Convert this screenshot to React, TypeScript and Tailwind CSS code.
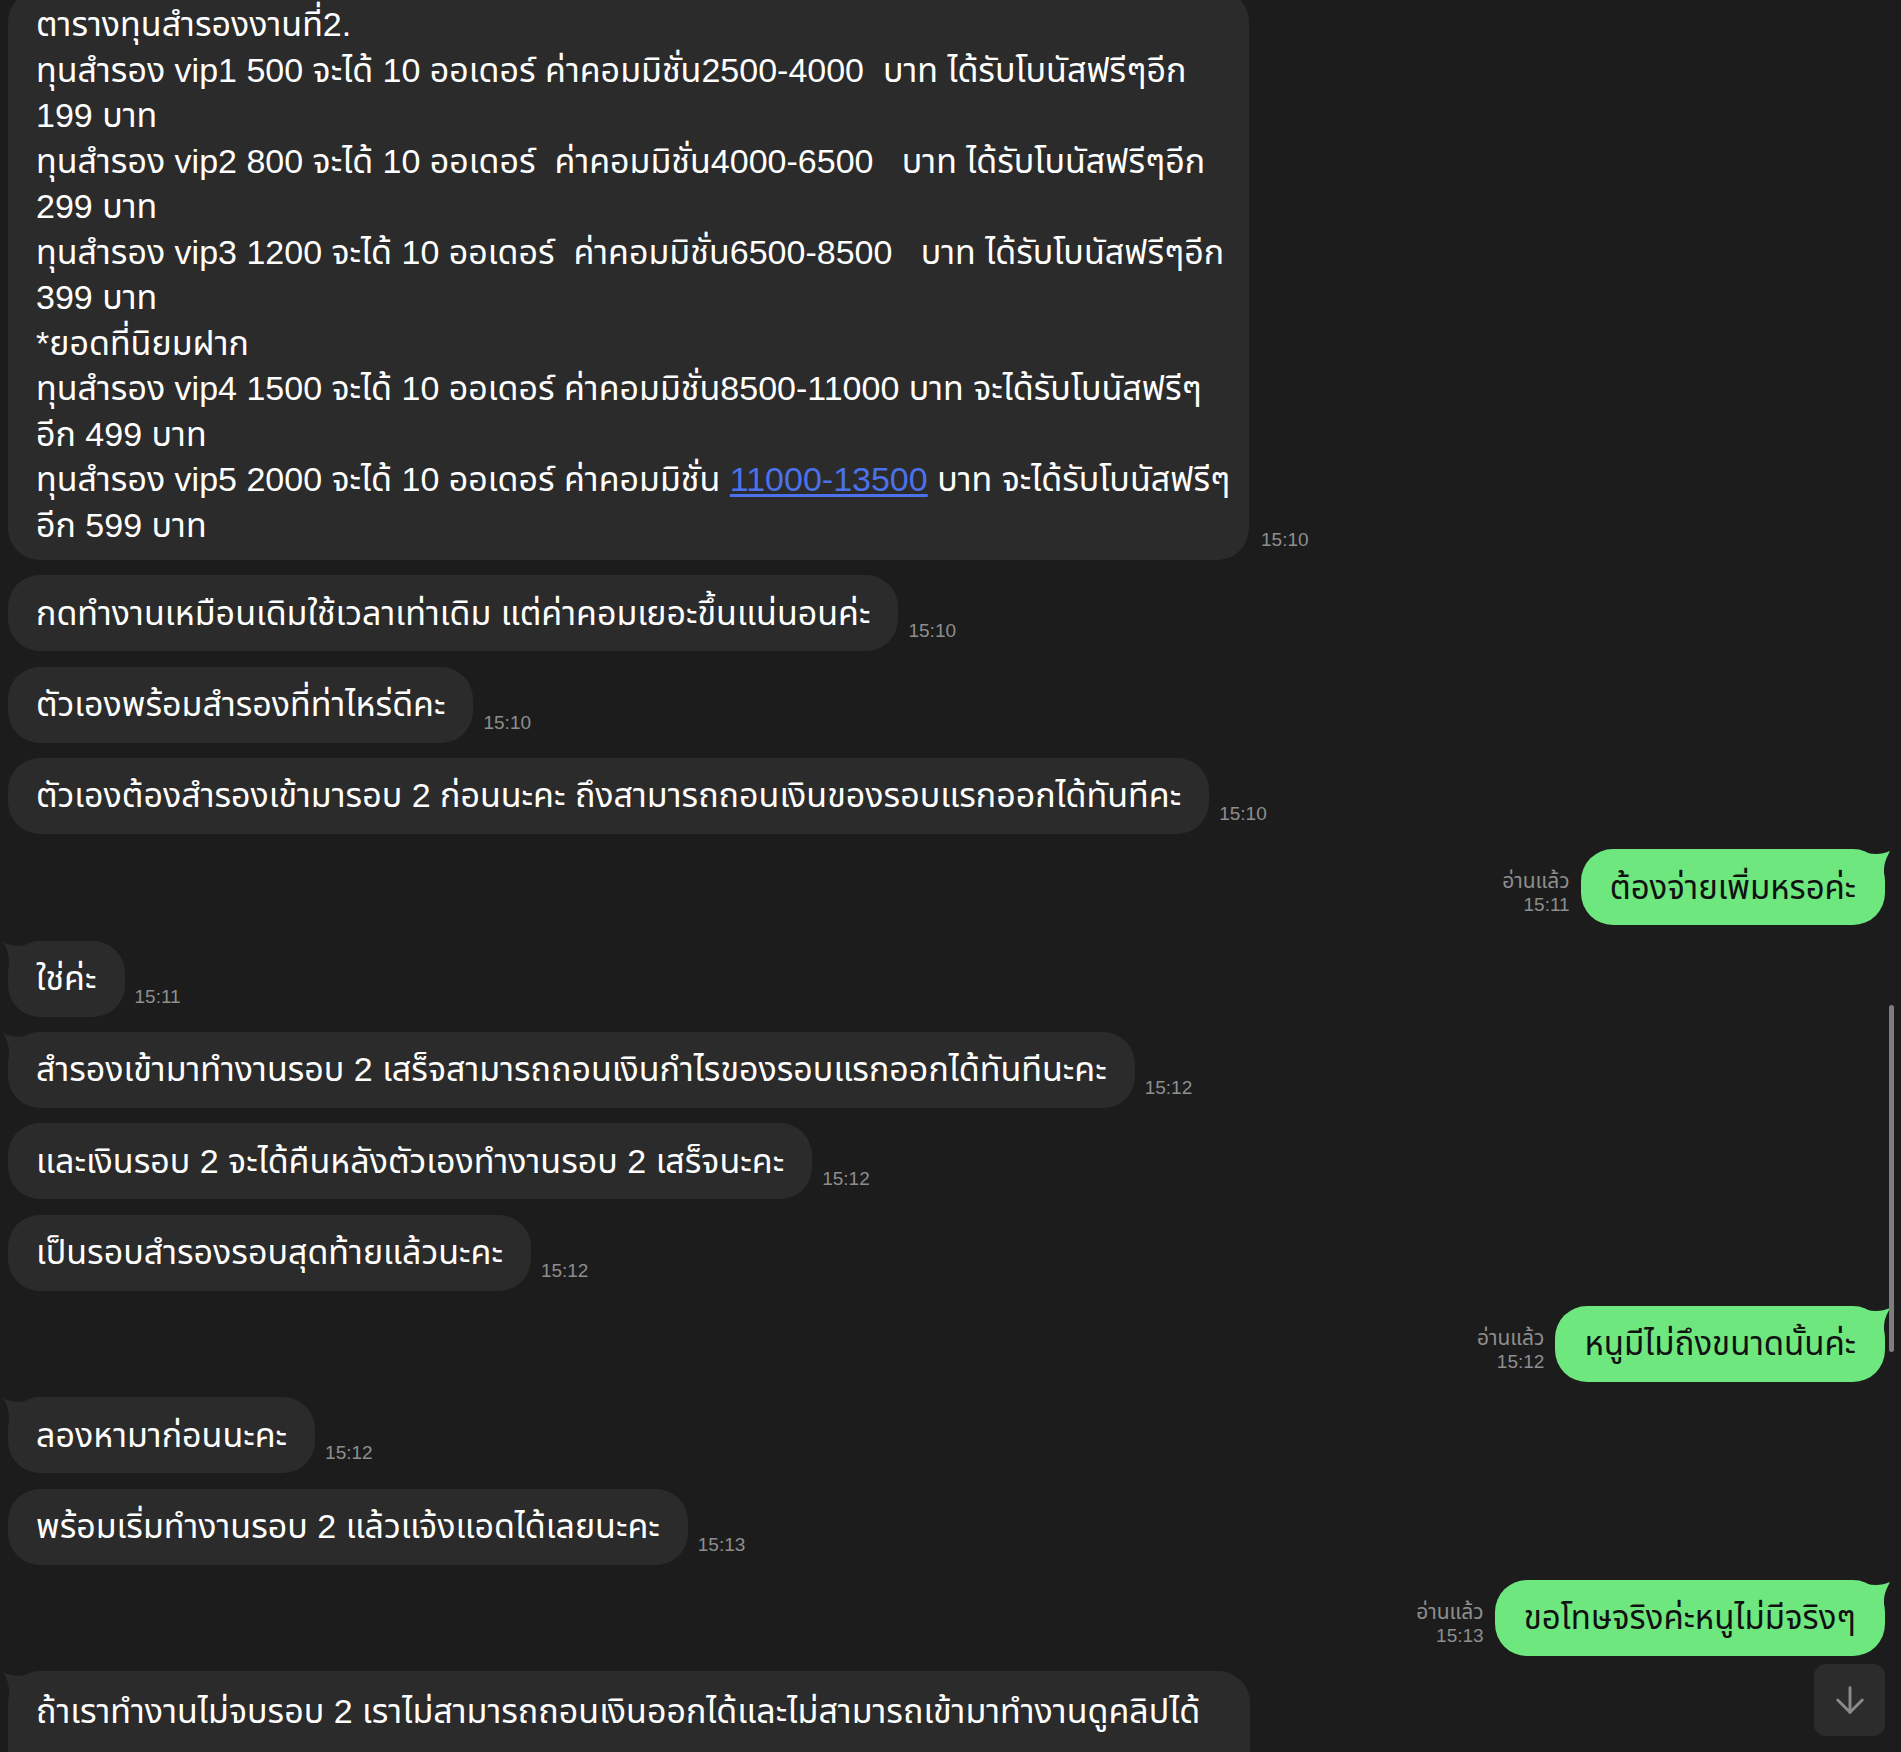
import React from 'react';
import { ArrowDown } from 'lucide-react';

const font = { fontFamily: '"Liberation Sans", "Noto Sans Thai", "Noto Sans", sans-serif' };

type Msg = { side: 'in' | 'out'; text: string; time: string; tail?: boolean };

const messages: Msg[] = [
  { side: 'in', text: 'กดทำงานเหมือนเดิมใช้เวลาเท่าเดิม แต่ค่าคอมเยอะขึ้นแน่นอนค่ะ', time: '15:10' },
  { side: 'in', text: 'ตัวเองพร้อมสำรองที่ท่าไหร่ดีคะ', time: '15:10' },
  { side: 'in', text: 'ตัวเองต้องสำรองเข้ามารอบ 2 ก่อนนะคะ ถึงสามารถถอนเงินของรอบแรกออกได้ทันทีคะ', time: '15:10' },
  { side: 'out', text: 'ต้องจ่ายเพิ่มหรอค่ะ', time: '15:11' },
  { side: 'in', text: 'ใช่ค่ะ', time: '15:11', tail: true },
  { side: 'in', text: 'สำรองเข้ามาทำงานรอบ 2 เสร็จสามารถถอนเงินกำไรของรอบแรกออกได้ทันทีนะคะ', time: '15:12', tail: true },
  { side: 'in', text: 'และเงินรอบ 2 จะได้คืนหลังตัวเองทำงานรอบ 2 เสร็จนะคะ', time: '15:12' },
  { side: 'in', text: 'เป็นรอบสำรองรอบสุดท้ายแล้วนะคะ', time: '15:12' },
  { side: 'out', text: 'หนูมีไม่ถึงขนาดนั้นค่ะ', time: '15:12' },
  { side: 'in', text: 'ลองหามาก่อนนะคะ', time: '15:12', tail: true },
  { side: 'in', text: 'พร้อมเริ่มทำงานรอบ 2 แล้วแจ้งแอดได้เลยนะคะ', time: '15:13' },
  { side: 'out', text: 'ขอโทษจริงค่ะหนูไม่มีจริงๆ', time: '15:13' },
];

const bigLines: React.ReactNode[] = [
  'ตารางทุนสำรองงานที่2.',
  'ทุนสำรอง vip1 500 จะได้ 10 ออเดอร์ ค่าคอมมิชั่น2500-4000  บาท ได้รับโบนัสฟรีๆอีก',
  '199 บาท',
  'ทุนสำรอง vip2 800 จะได้ 10 ออเดอร์  ค่าคอมมิชั่น4000-6500   บาท ได้รับโบนัสฟรีๆอีก',
  '299 บาท',
  'ทุนสำรอง vip3 1200 จะได้ 10 ออเดอร์  ค่าคอมมิชั่น6500-8500   บาท ได้รับโบนัสฟรีๆอีก',
  '399 บาท',
  '*ยอดที่นิยมฝาก',
  'ทุนสำรอง vip4 1500 จะได้ 10 ออเดอร์ ค่าคอมมิชั่น8500-11000 บาท จะได้รับโบนัสฟรีๆ',
  'อีก 499 บาท',
  <>
    ทุนสำรอง vip5 2000 จะได้ 10 ออเดอร์ ค่าคอมมิชั่น{' '}
    <span className="text-[#4b72ec] underline underline-offset-[3px]">11000-13500</span> บาท จะได้รับโบนัสฟรีๆ
  </>,
  'อีก 599 บาท',
];

const GrayTail = () => (
  <svg className="absolute left-[-5px] top-0" width="32" height="32" viewBox="0 0 32 32">
    <path d="M32 1 C22 6 10 6 0 1 C4 8 6 13 6 22 L6 32 L32 32 Z" fill="#2b2b2b" />
  </svg>
);

const GreenTail = () => (
  <svg className="absolute right-[-6px] top-0" width="32" height="32" viewBox="0 0 32 32">
    <path d="M0 1 C10 6 22 6 31 2 C28 8 25 13 25 22 L25 32 L0 32 Z" fill="#6ee77f" />
  </svg>
);

const Row = ({ m }: { m: Msg }) => {
  if (m.side === 'out') {
    return (
      <div className="flex items-end justify-end gap-[11px] pr-[16px]">
        <div className="text-right leading-[24px] text-[#8e8e8e] mb-[8px]">
          <div className="text-[21px]">อ่านแล้ว</div>
          <div className="text-[19px]">{m.time}</div>
        </div>
        <div className="relative h-[76px] flex items-center rounded-[32px] bg-[#6ee77f] px-[29px] text-[33px] text-[#111] whitespace-nowrap">
          <GreenTail />
          <span className="relative">{m.text}</span>
        </div>
      </div>
    );
  }
  return (
    <div className="flex items-end gap-[10px]">
      <div className="relative h-[76px] flex items-center rounded-[32px] bg-[#2b2b2b] px-[28px] text-[34px] text-white whitespace-nowrap">
        {m.tail && <GrayTail />}
        <span className="relative">{m.text}</span>
      </div>
      <span className="text-[19px] leading-[20px] text-[#8e8e8e] mb-[10px]">{m.time}</span>
    </div>
  );
};

export default function App() {
  return (
    <div className="relative w-[1901px] h-[1752px] overflow-hidden bg-[#1c1c1c]" style={font}>
      <div className="flex flex-col gap-[15.33px] pl-[8px]">
        <div className="flex items-end gap-[12px] mt-[-10px]">
          <div className="w-[1241px] rounded-[32px] bg-[#2b2b2b] px-[28px] py-[12px] text-[34px] leading-[45.5px] text-white">
            {bigLines.map((l, i) => (
              <div key={i} className="whitespace-pre">{l}</div>
            ))}
          </div>
          <span className="text-[19px] leading-[20px] text-[#8e8e8e] mb-[10px]">15:10</span>
        </div>

        {messages.map((m, i) => (
          <Row key={i} m={m} />
        ))}

        <div className="relative w-[1242px] rounded-t-[32px] bg-[#2b2b2b] px-[28px] pt-[18px] pb-[40px] text-[34px] leading-[45.5px] text-white whitespace-nowrap">
          <GrayTail />
          <span className="relative">ถ้าเราทำงานไม่จบรอบ 2 เราไม่สามารถถอนเงินออกได้และไม่สามารถเข้ามาทำงานดูคลิปได้</span>
        </div>
      </div>

      {/* scrollbar */}
      <div className="absolute left-[1889px] top-[1005px] w-[5px] h-[347px] rounded-full bg-[#7d7d7d]" />

      {/* jump to bottom */}
      <button className="absolute left-[1814px] top-[1664px] w-[71px] h-[72px] rounded-[12px] bg-[#2c2c2c] flex items-center justify-center">
        <ArrowDown className="w-[42px] h-[42px] text-[#8a8a8a]" strokeWidth={1.7} />
      </button>
    </div>
  );
}
